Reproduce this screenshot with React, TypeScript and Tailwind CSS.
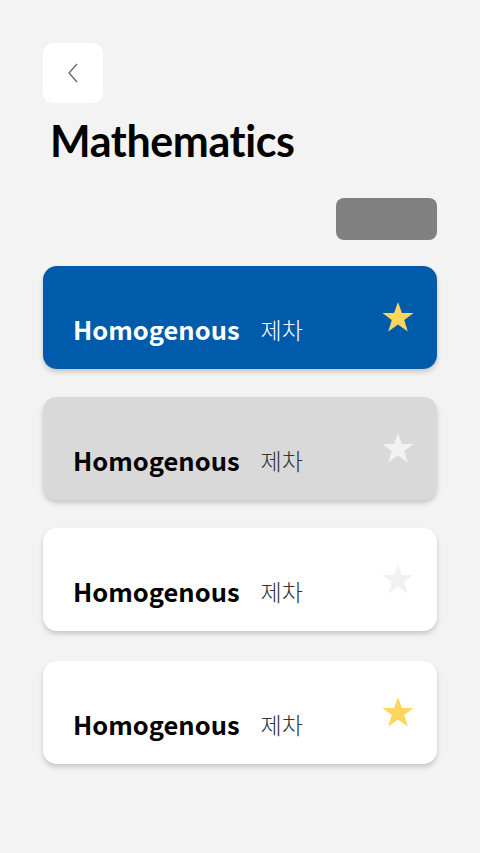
import React from 'react';

type Card = { bg: string; text: string; sub: string; star: string };

const cards: Card[] = [
  { bg: 'bg-[#005baa]', text: 'text-white', sub: 'text-white', star: '#ffd65c' },
  { bg: 'bg-[#d9d9d9]', text: 'text-black', sub: 'text-[#333333]', star: '#f2f2f2' },
  { bg: 'bg-white', text: 'text-black', sub: 'text-[#333333]', star: '#f1f1f1' },
  { bg: 'bg-white', text: 'text-black', sub: 'text-[#333333]', star: '#ffd65c' },
];

const Star: React.FC<{ color: string }> = ({ color }) => (
  <svg width="34" height="33" viewBox="0 0 24 23">
    <path d="M12 0.5l2.8 7.8h8.2l-6.6 5 2.5 8-6.9-4.9-6.9 4.9 2.5-8-6.6-5h8.2z" fill={color} />
  </svg>
);

const App: React.FC = () => {
  return (
    <div className="min-h-[853px] w-[480px] bg-[#f3f3f3] px-[43px] pt-[43px]" style={{ fontFamily: '"Noto Sans", "Noto Sans CJK KR", sans-serif' }}>
      <button className="w-[60px] h-[60px] bg-white rounded-[10px] flex items-center justify-center">
        <svg width="14" height="24" viewBox="0 0 14 24">
          <path d="M11 3L3 12l8 9" fill="none" stroke="#666666" strokeWidth="1.3" />
        </svg>
      </button>
      <h1 className="mt-[13px] ml-[7px] text-[43px] leading-[50px] font-bold text-black tracking-[-0.4px]" style={{ fontFamily: '"Lato", sans-serif' }}>
        Mathematics
      </h1>
      <div className="flex justify-end mt-[32px]">
        <div className="w-[101px] h-[42px] bg-[#808080] rounded-[8px]" />
      </div>
      <div className="mt-[26px] flex flex-col gap-[28px]">
        {cards.map((c, i) => (
          <div key={i} className={`${c.bg} h-[103px] rounded-[14px] shadow-[0_3px_5px_rgba(0,0,0,0.18)] relative flex items-end pl-[30px] pb-[22px] last:mt-[2px]`}>
            <span className={`${c.text} text-[25.5px] font-bold leading-[36px]`} style={{ fontFamily: '"Noto Sans CJK KR", sans-serif' }}>Homogenous</span>
            <span className={`${c.sub} text-[23px] font-light leading-[36px] ml-[21px]`} style={{ fontFamily: '"Noto Sans CJK KR", sans-serif' }}>제차</span>
            <div className="absolute right-[22px] top-[35px]">
              <Star color={c.star} />
            </div>
          </div>
        ))}
      </div>
    </div>
  );
};

export default App;
